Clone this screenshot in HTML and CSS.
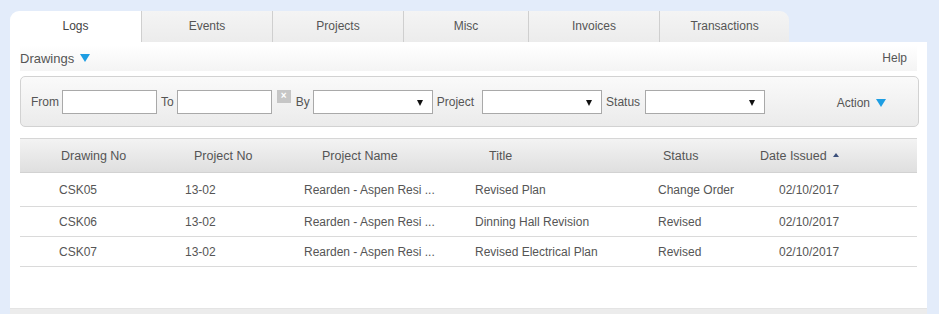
FILE: index.html
```html
<!DOCTYPE html>
<html lang="en">
<head>
  <meta charset="UTF-8">
  <title>Drawings Log</title>
  <link rel="stylesheet" href="styles.css">
</head>
<body>

  <div class="wrap">
    <ul class="tabs">
      <li class="tab active t-logs">Logs</li>
      <li class="tab t-events">Events</li>
      <li class="tab t-projects">Projects</li>
      <li class="tab t-misc">Misc</li>
      <li class="tab t-invoices">Invoices</li>
      <li class="tab last t-trans">Transactions</li>
    </ul>

    <div class="panel">
      <div class="titlebar">
        <span class="title">Drawings</span>
        <span class="drop"></span>
        <span class="help">Help</span>
      </div>

      <div class="filters">
        <label>From</label>
        <div class="field"></div>
        <label>To</label>
        <div class="field"></div>
        <span class="clear">&times;</span>
        <label>By</label>
        <div class="select"><span class="caret"></span></div>
        <label class="lbl-project">Project</label>
        <div class="select"><span class="caret"></span></div>
        <label class="lbl-status">Status</label>
        <div class="select"><span class="caret"></span></div>
        <div class="action">Action <span class="drop"></span></div>
      </div>

      <div class="grid">
        <div class="row head">
          <div>Drawing No</div>
          <div>Project No</div>
          <div>Project Name</div>
          <div>Title</div>
          <div>Status</div>
          <div>Date Issued <span class="sort"></span></div>
        </div>
        <div class="row first">
          <div>CSK05</div>
          <div>13-02</div>
          <div>Rearden - Aspen Resi ...</div>
          <div>Revised Plan</div>
          <div>Change Order</div>
          <div>02/10/2017</div>
        </div>
        <div class="row">
          <div>CSK06</div>
          <div>13-02</div>
          <div>Rearden - Aspen Resi ...</div>
          <div>Dinning Hall Revision</div>
          <div>Revised</div>
          <div>02/10/2017</div>
        </div>
        <div class="row">
          <div>CSK07</div>
          <div>13-02</div>
          <div>Rearden - Aspen Resi ...</div>
          <div>Revised Electrical Plan</div>
          <div>Revised</div>
          <div>02/10/2017</div>
        </div>
      </div>
    </div>
    <div class="pager"></div>
  </div>

</body>
</html>
```

FILE: styles.css
```css
body {
  margin: 0;
  background: #e3ecfa;
  font-family: "Liberation Sans", Arial, sans-serif;
  font-size: 12px;
  color: #555;
}
.wrap {
  padding: 11px 12px 0 10px;
}
.tabs {
  display: flex;
  margin: 0;
  padding: 0;
  list-style: none;
  height: 31px;
}
.tab {
  width: 131px;
  line-height: 31px;
  text-align: center;
  color: #555;
  background: linear-gradient(#f4f4f4, #ececec);
  border-left: 1px solid #cfcfcf;
  box-sizing: border-box;
}
.tab.active {
  background: #fff;
  border-left: none;
  border-radius: 9px 0 0 0;
  color: #444;
}
.t-misc { width: 125px; }
.t-trans { width: 130px; }
.tab.last {
  border-radius: 0 9px 0 0;
}
.panel {
  background: #fff;
  padding: 3px 10px 0;
  height: 263px;
}
.titlebar {
  display: flex;
  align-items: center;
  height: 26px;
  padding-right: 10px;
  background: linear-gradient(#fff, #f4f4f4);
}
.title {
  font-size: 13px;
  color: #555;
}
.drop {
  display: inline-block;
  width: 0;
  height: 0;
  margin-left: 6px;
  border-left: 5px solid transparent;
  border-right: 5px solid transparent;
  border-top: 8px solid #1e9ee3;
}
.help {
  margin-left: auto;
  color: #555;
}
.filters {
  display: flex;
  align-items: center;
  height: 49px;
  margin-top: 5px;
  margin-right: -2px;
  padding: 0 32px 0 10px;
  border: 1px solid #d2d2d2;
  border-radius: 5px;
  background: linear-gradient(#fafafa, #ebebeb);
}
.filters label {
  margin-right: 3px;
}
.filters .lbl-project { margin-right: 8px; }
.filters .lbl-status { margin-right: 5px; }
.field, .select {
  height: 24px;
  background: #fff;
  border: 1px solid #a9a9a9;
  box-sizing: border-box;
  margin-right: 4px;
}
.field { width: 95px; }
.select {
  width: 120px;
  position: relative;
}
.caret {
  position: absolute;
  right: 9px;
  top: 9px;
  border-left: 3px solid transparent;
  border-right: 3px solid transparent;
  border-top: 6px solid #111;
}
.clear {
  width: 14px;
  height: 13px;
  margin: -11px 5px 0 1px;
  background: #c6c6c6;
  color: #fff;
  font-size: 10px;
  line-height: 12px;
  text-align: center;
  font-weight: bold;
}
.action {
  margin-left: auto;
  padding-top: 3px;
  display: flex;
  align-items: center;
}
.grid {
  margin-top: 11px;
}
.row {
  display: grid;
  grid-template-columns: 145px 125px 170px 185px 105px 167px;
  height: 29px;
  align-items: center;
  border-bottom: 1px solid #dadada;
}
.row.first { height: 33px; }
.row > div:nth-child(1) { padding-left: 39px; }
.row > div:nth-child(2) { padding-left: 20px; }
.row > div:nth-child(3) { padding-left: 14px; }
.row > div:nth-child(4) { padding-left: 15px; }
.row > div:nth-child(5) { padding-left: 13px; }
.row > div:nth-child(6) { padding-left: 29px; }
.row.head {
  height: 33px;
  border-top: 1px solid #d6d6d6;
  border-bottom: 1px solid #d2d2d2;
  background: linear-gradient(#f3f3f3, #dfdfdf);
  font-size: 12.5px;
}
.row.head > div:nth-child(1) { padding-left: 41px; }
.row.head > div:nth-child(2) { padding-left: 29px; }
.row.head > div:nth-child(3) { padding-left: 32px; }
.row.head > div:nth-child(4) { padding-left: 29px; }
.row.head > div:nth-child(5) { padding-left: 18px; }
.row.head > div:nth-child(6) { padding-left: 10px; }
.sort {
  display: inline-block;
  vertical-align: middle;
  margin-left: 3px;
  margin-top: -3px;
  border-left: 3px solid transparent;
  border-right: 3px solid transparent;
  border-bottom: 4px solid #3b4f7a;
}
.pager {
  height: 6px;
  background: #ececec;
  border-top: 1px solid #e4e4e4;
  border-bottom: 1px solid #d0d0d0;
}
```
